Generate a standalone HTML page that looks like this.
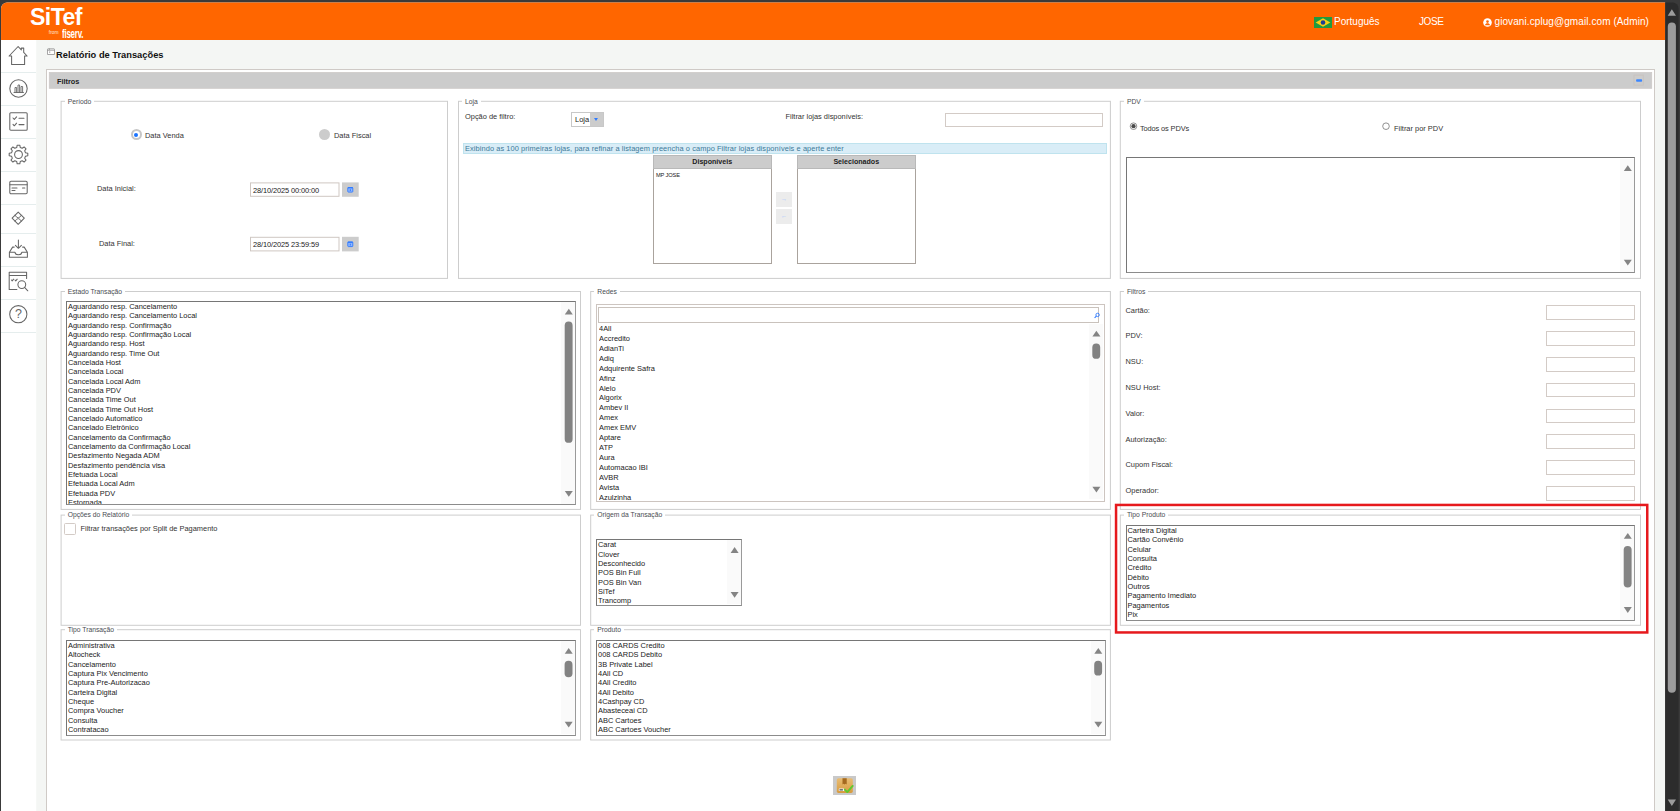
<!DOCTYPE html>
<html lang="pt-BR">
<head>
<meta charset="utf-8">
<title>Relatório de Transações</title>
<style>
*{box-sizing:border-box;margin:0;padding:0}
html,body{width:1680px;height:811px;overflow:hidden}
body{background:#3a3a3a;font-family:"Liberation Sans",Arial,sans-serif;color:#222;position:relative;font-size:7.33px}
body>*{position:absolute}
.sep{left:1px;width:35px;height:1px;background:#e5eded}
.ico{left:1px;width:35px}
.ico svg{display:block;margin:0 auto;overflow:visible}
.hw{color:#fff;font-size:10px;line-height:12px;white-space:nowrap}
#title{left:56px;top:48.6px;font-size:9.3px;font-weight:bold;color:#111;line-height:12px;white-space:nowrap}
#panel{left:46px;top:69px;width:1609px;height:760px;background:#fff;border:1px solid #cfcac6}
#pbar{left:49px;top:72px;width:1602px;height:16px;background:#cccccc}
.fs{border:1px solid #d6d6d6;background:#fff}
.lg{background:#fff;padding:0 3px 0 3px;font-size:6.75px;line-height:8px;color:#4a4d52;white-space:nowrap}
.t{white-space:nowrap;font-size:7.43px;line-height:9px;color:#333}
.inp{background:#fff;border:1px solid #d3cbc6}
.lb{background:#fff;border:1px solid #767676;border-right-color:#9a9a9a;border-bottom-color:#8c8c8c;overflow:hidden;font-size:7.44px;line-height:9.33px;color:#222;white-space:nowrap;padding:0 0 0 1px}
.lb div{height:9.33px}
.up,.dn{width:0;height:0;border-left:4.5px solid transparent;border-right:4.5px solid transparent}
.up{border-bottom:6px solid #6e6e6e}
.dn{border-top:6px solid #6e6e6e}
.th{background:#828282;border-radius:4px}
.trk{background:#fafafa}
</style>
</head>
<body>
<svg style="left:0;top:0" width="1680" height="811" viewBox="0 0 1680 811"><path d="M1.04 811 V8.44 a6 6 0 0 1 6 -6 H1665.2 V811 Z" fill="#f4f6f4"/><path d="M1.04 40 V8.44 a6 6 0 0 1 6 -6 H1665.2 V40 Z" fill="#ff6600"/><rect x="1.04" y="40" width="35.2" height="771" fill="#fff"/><path d="M1665.2 811 V2.44 H1672.6 a6 6 0 0 1 6 6 V811 Z" fill="#2c2c2c"/><rect x="1667.8" y="22.6" width="8.1" height="670.2" rx="4" fill="#9c9c9c"/><path d="M1671.85 9.2 L1676 15.7 H1667.7 Z M1671.85 806.1 L1676 799.6 H1667.7 Z" fill="#9c9c9c"/></svg>
<div style="left:30px;top:4px;color:#fff;font-size:23px;font-weight:bold;line-height:26px;letter-spacing:-0.55px;white-space:nowrap;">SiTef</div>
<div style="left:48.8px;top:29.8px;color:#ffe6d5;font-size:4.8px;line-height:5px;white-space:nowrap;">from</div>
<div style="left:61.5px;top:26.4px;color:#fff;font-size:13.6px;font-weight:bold;line-height:15px;letter-spacing:-0.4px;white-space:nowrap;transform:scaleX(0.585);transform-origin:0 0;">fiserv.</div>
<svg style="left:1314px;top:17px" width="18" height="11" viewBox="0 0 18 11"><rect width="18" height="11" fill="#1f9a3f"/><polygon points="9,1.2 16.3,5.5 9,9.8 1.7,5.5" fill="#f7d117"/><circle cx="9" cy="5.5" r="2.3" fill="#1b3f94"/></svg>
<div class="hw" style="left:1334px;top:15.5px;">Português</div>
<div class="hw" style="left:1419px;top:15.5px;letter-spacing:-0.4px;">JOSE</div>
<svg style="left:1483px;top:18px" width="9" height="9" viewBox="0 0 9 9"><circle cx="4.5" cy="4.5" r="4.3" fill="#fff"/><circle cx="4.5" cy="3.6" r="1.3" fill="#ff6600"/><path d="M2 7.2c.3-1.5 1.3-2 2.5-2s2.2.5 2.5 2z" fill="#ff6600"/></svg>
<div class="hw" style="left:1494.5px;top:15.5px;letter-spacing:0.085px;">giovani.cplug@gmail.com (Admin)</div>
<div class="sep" style="left:1px;top:72px;"></div>
<div class="sep" style="left:1px;top:105px;"></div>
<div class="sep" style="left:1px;top:138px;"></div>
<div class="sep" style="left:1px;top:171px;"></div>
<div class="sep" style="left:1px;top:204px;"></div>
<div class="sep" style="left:1px;top:233px;"></div>
<div class="sep" style="left:1px;top:266px;"></div>
<div class="sep" style="left:1px;top:298.5px;"></div>
<div class="sep" style="left:1px;top:332px;"></div>
<svg style="left:8px;top:45px" width="21" height="21" viewBox="8 45 21 21" fill="none" stroke="#666" stroke-width="1.05" stroke-linejoin="round" stroke-linecap="round"><g transform="translate(8.10 45.50)"><path d="M1 10.5 L10 1 L13.2 4.4 V2.6 H15.6 V6.9 L19 10.5 H16.5 V19 H3.5 V10.5 Z"/></g></svg>
<svg style="left:9px;top:79px" width="19" height="19" viewBox="9 79 19 19" fill="none" stroke="#666" stroke-width="1.05" stroke-linejoin="round" stroke-linecap="round"><g transform="translate(9.00 79.00)"><circle cx="9.5" cy="9.5" r="8.7"/><path d="M5 13.5 H14.5 M6 13.5 V8.5 H7.6 V13.5 M9 13.5 V6 H10.6 V13.5 M12 13.5 V7.5 H13.6 V13.5" stroke-width="0.9"/></g></svg>
<svg style="left:9px;top:112px" width="19" height="19" viewBox="9 112 19 19" fill="none" stroke="#666" stroke-width="1.05" stroke-linejoin="round" stroke-linecap="round"><g transform="translate(9.00 112.00)"><rect x="0.8" y="0.8" width="17.4" height="17.4" rx="1"/><path d="M4 6 L5.3 7.4 L7.6 4.8 M10 6.2 H15 M4 12.4 L5.3 13.8 L7.6 11.2 M10 12.6 H15"/></g></svg>
<svg style="left:8px;top:144px" width="21" height="21" viewBox="8 144 21 21" fill="none" stroke="#666" stroke-width="1.05" stroke-linejoin="round" stroke-linecap="round"><g transform="translate(8.50 144.50)"><path d="M19.31 8.68 L19.31 11.32 L16.97 11.79 L16.20 13.67 L17.52 15.64 L15.64 17.52 L13.67 16.20 L11.79 16.97 L11.32 19.31 L8.68 19.31 L8.21 16.97 L6.33 16.20 L4.36 17.52 L2.48 15.64 L3.80 13.67 L3.03 11.79 L0.69 11.32 L0.69 8.68 L3.03 8.21 L3.80 6.33 L2.48 4.36 L4.36 2.48 L6.33 3.80 L8.21 3.03 L8.68 0.69 L11.32 0.69 L11.79 3.03 L13.67 3.80 L15.64 2.48 L17.52 4.36 L16.20 6.33 L16.97 8.21 Z"/><circle cx="10" cy="10" r="3.9"/></g></svg>
<svg style="left:9px;top:180px" width="19" height="15" viewBox="9 180 19 15" fill="none" stroke="#666" stroke-width="1.05" stroke-linejoin="round" stroke-linecap="round"><g transform="translate(9.00 180.50)"><rect x="0.8" y="0.8" width="17.4" height="12.4" rx="1.2"/><path d="M0.8 4.2 H18.2 M3 7.5 H8 M13.5 7.5 H15.8 M3 10 H6"/></g></svg>
<svg style="left:11px;top:211px" width="15" height="15" viewBox="11 211 15 15" fill="none" stroke="#666" stroke-width="1.05" stroke-linejoin="round" stroke-linecap="round"><g transform="translate(11.20 211.20)"><path d="M7 0.9 L13.1 7 L7 13.1 L0.9 7 Z"/><path d="M3.8 4 Q7 9.6 10.2 4 M3.8 10 Q7 4.4 10.2 10" stroke-width="0.9"/></g></svg>
<svg style="left:8px;top:239px" width="21" height="20" viewBox="8 239 21 20" fill="none" stroke="#666" stroke-width="1.05" stroke-linejoin="round" stroke-linecap="round"><g transform="translate(8.40 239.10)"><path d="M10 0.8 V9 M7 6.2 L10 9.2 L13 6.2"/><path d="M5.8 8 H4.2 L1 13.2 V18.2 H19 V13.2 L15.8 8 H14.2 M1 13.2 H6.6 Q7 15.6 10 15.6 Q13 15.6 13.4 13.2 H19"/></g></svg>
<svg style="left:8px;top:271px" width="21" height="21" viewBox="8 271 21 21" fill="none" stroke="#666" stroke-width="1.05" stroke-linejoin="round" stroke-linecap="round"><g transform="translate(8.40 271.40)"><path d="M18.2 7 V0.8 H0.8 V18.2 H8.5 M0.8 4.2 H18.2 M3 8.6 L3.8 9.5 L5.2 7.8 M6.6 8.6 L7.4 9.5 L8.8 7.8"/><circle cx="13.4" cy="13.2" r="3.9"/><path d="M16.2 16 L19.4 19.4"/></g></svg>
<svg style="left:8px;top:304px" width="20" height="20" viewBox="8 304 20 20" fill="none" stroke="#666" stroke-width="1.05" stroke-linejoin="round" stroke-linecap="round"><g transform="translate(8.80 304.70)"><circle cx="9.5" cy="9.5" r="8.6"/></g></svg>
<div style="left:1px;top:307.2px;width:35px;text-align:center;font-size:12.5px;line-height:14px;color:#666;">?</div>
<svg style="left:47px;top:48px" width="8" height="7" viewBox="0 0 8 7"><rect x="0.4" y="0.9" width="7.2" height="5.7" rx="0.6" fill="#fff" stroke="#858585" stroke-width="0.8"/><path d="M0.5 2.4H7.5M2.4 0.5V2.2" stroke="#858585" stroke-width="0.6" fill="none"/><rect x="2" y="3.3" width="1.3" height="1.8" fill="#bbb"/></svg>
<div id="title">Relatório de Transações</div>
<div id="panel"></div>
<svg style="left:47px;top:70px" width="1607" height="21" viewBox="47 70 1607 21" ><rect x="49.2" y="72.3" width="1602.60" height="16.10" fill="#cccccc" stroke="#cbc6c3" stroke-width="0.6"/></svg>
<div style="left:57px;top:76.5px;font-size:7.3px;font-weight:bold;line-height:9px;color:#222;white-space:nowrap;">Filtros</div>
<svg style="left:1632px;top:73px" width="14" height="15" viewBox="1632 73 14 15" ><rect x="1634" y="75.1" width="9.30" height="10.00" fill="none" stroke="#c8c2be" stroke-width="0.9"/></svg>
<svg style="left:1635px;top:78px" width="9" height="5" viewBox="1635 78 9 5"><rect x="1636.1" y="79.3" width="6" height="2.4" rx="0.8" fill="#3b86ff"/></svg>
<svg style="left:59px;top:99px" width="391" height="182" viewBox="59 99 391 182" ><rect x="61.1" y="101.3" width="386.40" height="177.10" fill="#fff" stroke="#cdcdcd" stroke-width="1"/></svg>
<div class="lg" style="left:64.7px;top:97.7px;">Período</div>
<div style="left:130.7px;top:129px;width:11px;height:11px;border-radius:50%;background:#fff;border:2.6px solid #c6c6c6;"></div>
<div style="left:134.2px;top:132.5px;width:4px;height:4px;border-radius:50%;background:#1a73ff;"></div>
<div class="t" style="left:145px;top:130.5px;">Data Venda</div>
<div style="left:319.2px;top:129px;width:11.3px;height:11.3px;border-radius:50%;background:#ccc;"></div>
<div class="t" style="left:334px;top:130.5px;">Data Fiscal</div>
<div class="t" style="left:97px;top:184px;">Data Inicial:</div>
<svg style="left:248px;top:180px" width="93" height="19" viewBox="248 180 93 19" ><rect x="250.5" y="182.9" width="88.50" height="13.40" fill="#fff" stroke="#cfc7c2" stroke-width="1"/></svg>
<div class="t" style="left:253px;top:185.5px;color:#222;letter-spacing:-0.11px;">28/10/2025 00:00:00</div>
<svg style="left:340px;top:180px" width="21" height="19" viewBox="340 180 21 19" ><rect x="342" y="182.4" width="16.70" height="14.40" fill="#cccccc" stroke="none" stroke-width="0"/></svg>
<svg style="left:347px;top:186px" width="7" height="7" viewBox="347 186 7 7" ><g transform="translate(347.30 186.60)"><rect x="0.5" y="0.9" width="5" height="4.6" rx="0.6" fill="#8fb6ff" stroke="#2f7bff" stroke-width="0.9"/><rect x="0.5" y="0.5" width="5" height="1.3" fill="#2f7bff"/><rect x="2.5" y="2.6" width="1" height="1.8" fill="#2f7bff"/></g></svg>
<div class="t" style="left:99px;top:238.5px;">Data Final:</div>
<svg style="left:248px;top:235px" width="93" height="18" viewBox="248 235 93 18" ><rect x="250.5" y="237.3" width="88.50" height="13.60" fill="#fff" stroke="#cfc7c2" stroke-width="1"/></svg>
<div class="t" style="left:253px;top:240px;color:#222;letter-spacing:-0.11px;">28/10/2025 23:59:59</div>
<svg style="left:340px;top:234px" width="21" height="20" viewBox="340 234 21 20" ><rect x="342" y="236.8" width="16.70" height="14.60" fill="#cccccc" stroke="none" stroke-width="0"/></svg>
<svg style="left:347px;top:241px" width="7" height="7" viewBox="347 241 7 7" ><g transform="translate(347.30 241.10)"><rect x="0.5" y="0.9" width="5" height="4.6" rx="0.6" fill="#8fb6ff" stroke="#2f7bff" stroke-width="0.9"/><rect x="0.5" y="0.5" width="5" height="1.3" fill="#2f7bff"/><rect x="2.5" y="2.6" width="1" height="1.8" fill="#2f7bff"/></g></svg>
<svg style="left:456px;top:99px" width="657" height="182" viewBox="456 99 657 182" ><rect x="458.5" y="101.3" width="651.90" height="177.10" fill="#fff" stroke="#cdcdcd" stroke-width="1"/></svg>
<div class="lg" style="left:462.1px;top:97.7px;">Loja</div>
<div class="t" style="left:465px;top:112px;">Opção de filtro:</div>
<div class="inp" style="left:571px;top:112px;width:33px;height:15px;border-color:#c8c8c8;"></div>
<div class="t" style="left:575px;top:115.3px;font-size:7.5px;color:#222;">Loja</div>
<div style="left:590.3px;top:113px;width:12.7px;height:13px;background:#cccccc;"></div>
<div style="left:594.2px;top:118px;width:0;height:0;border-left:2.5px solid transparent;border-right:2.5px solid transparent;border-top:3px solid #2f7bff;"></div>
<div class="t" style="left:785.5px;top:112px;">Filtrar lojas disponíveis:</div>
<div class="inp" style="left:945px;top:112.5px;width:158px;height:14.5px;"></div>
<div style="left:463px;top:143px;width:644.0px;height:10.5px;background:#d9edf7;border:1px solid #bfe3ee;"></div>
<div class="t" style="left:465px;top:144px;color:#3d7a99;letter-spacing:0.077px;">Exibindo as 100 primeiras lojas, para refinar a listagem preencha o campo Filtrar lojas disponíveis e aperte enter</div>
<div style="left:652.5px;top:154.5px;width:119.5px;height:109px;background:#fff;border:1px solid #aaa39d;"></div>
<div style="left:652.5px;top:154.5px;width:119.5px;height:14px;background:#cccccc;border:1px solid #b9b9b9;text-align:center;font-weight:bold;font-size:7.1px;line-height:12px;color:#222;">Disponíveis</div>
<div style="left:796.5px;top:154.5px;width:119.5px;height:109px;background:#fff;border:1px solid #aaa39d;"></div>
<div style="left:796.5px;top:154.5px;width:119.5px;height:14px;background:#cccccc;border:1px solid #b9b9b9;text-align:center;font-weight:bold;font-size:7.1px;line-height:12px;color:#222;">Selecionados</div>
<div class="t" style="left:656px;top:172px;font-size:5.7px;line-height:7px;color:#222;letter-spacing:-0.15px;">MP JOSE</div>
<div style="left:775.5px;top:192px;width:16.5px;height:14.8px;background:#ececec;text-align:center;font-size:6.2px;line-height:13.5px;color:#9cc0ff;">→</div>
<div style="left:775.5px;top:209px;width:16.5px;height:14.5px;background:#ececec;text-align:center;font-size:6.2px;line-height:13.5px;color:#9cc0ff;">←</div>
<svg style="left:1118px;top:99px" width="525" height="182" viewBox="1118 99 525 182" ><rect x="1120.3" y="101.3" width="520.20" height="177.10" fill="#fff" stroke="#cdcdcd" stroke-width="1"/></svg>
<div class="lg" style="left:1123.8999999999999px;top:97.7px;">PDV</div>
<svg style="left:1129px;top:122px" width="9" height="9" viewBox="1129 122 9 9" ><g transform="translate(1129.50 122.20)"><circle cx="4" cy="4" r="3.3" fill="#fff" stroke="#767676" stroke-width="0.8"/><circle cx="4" cy="4" r="2.1" fill="#4a4a4a"/></g></svg>
<div class="t" style="left:1140px;top:124px;letter-spacing:-0.13px;">Todos os PDVs</div>
<svg style="left:1382px;top:122px" width="8" height="9" viewBox="1382 122 8 9" ><g transform="translate(1382.00 122.20)"><circle cx="4" cy="4" r="3.3" fill="#fff" stroke="#767676" stroke-width="0.8"/></g></svg>
<div class="t" style="left:1394px;top:124px;">Filtrar por PDV</div>
<div class="lb" style="left:1125.5px;top:157px;width:509.5px;height:116px;"></div>
<div class="trk" style="left:1620px;top:158.5px;width:14px;height:113.69999999999999px;"></div>
<svg style="left:1622px;top:164px" width="11" height="9" viewBox="1622 164 11 9" ><path d="M1627.80 165.20 L1631.80 171.00 H1623.80 Z" fill="#848484"/></svg>
<svg style="left:1622px;top:258px" width="11" height="9" viewBox="1622 258 11 9" ><path d="M1627.80 265.50 L1631.80 259.70 H1623.80 Z" fill="#848484"/></svg>
<svg style="left:59px;top:289px" width="524" height="223" viewBox="59 289 524 223" ><rect x="61.1" y="291.5" width="519.40" height="217.90" fill="#fff" stroke="#cdcdcd" stroke-width="1"/></svg>
<div class="lg" style="left:64.7px;top:287.9px;">Estado Transação</div>
<div class="lb" style="left:66px;top:301px;width:510px;height:203.5px;padding-top:0px;"><div>Aguardando resp. Cancelamento</div><div>Aguardando resp. Cancelamento Local</div><div>Aguardando resp. Confirmação</div><div>Aguardando resp. Confirmação Local</div><div>Aguardando resp. Host</div><div>Aguardando resp. Time Out</div><div>Cancelada Host</div><div>Cancelada Local</div><div>Cancelada Local Adm</div><div>Cancelada PDV</div><div>Cancelada Time Out</div><div>Cancelada Time Out Host</div><div>Cancelado Automatico</div><div>Cancelado Eletrônico</div><div>Cancelamento da Confirmação</div><div>Cancelamento da Confirmação Local</div><div>Desfazimento Negada ADM</div><div>Desfazimento pendência visa</div><div>Efetuada Local</div><div>Efetuada Local Adm</div><div>Efetuada PDV</div><div>Estornada</div></div>
<div class="trk" style="left:561px;top:302px;width:14px;height:201.5px;"></div>
<svg style="left:563px;top:307px" width="11" height="9" viewBox="563 307 11 9" ><path d="M568.80 308.70 L572.80 314.50 H564.80 Z" fill="#848484"/></svg>
<svg style="left:563px;top:490px" width="11" height="8" viewBox="563 490 11 8" ><path d="M568.80 496.80 L572.80 491.00 H564.80 Z" fill="#848484"/></svg>
<svg style="left:563px;top:320px" width="11" height="124" viewBox="563 320 11 124" ><rect x="564.70" y="321.60" width="7.9" height="121.2" rx="3.9" fill="#828282"/></svg>
<svg style="left:588px;top:289px" width="525" height="223" viewBox="588 289 525 223" ><rect x="590.7" y="291.5" width="519.70" height="217.90" fill="#fff" stroke="#cdcdcd" stroke-width="1"/></svg>
<div class="lg" style="left:594.3000000000001px;top:287.9px;">Redes</div>
<div style="left:596px;top:304px;width:509px;height:197.5px;background:#fff;border:1px solid #cdc5c0;"></div>
<div style="left:597.5px;top:307px;width:501px;height:15.5px;background:#fff;border:1px solid #c9c2bc;"></div>
<svg style="left:1094px;top:312px" width="6" height="7" viewBox="1094 312 6 7" ><g transform="translate(1094.00 312.50)"><circle cx="3.6" cy="2.4" r="1.7" fill="none" stroke="#2f7bff" stroke-width="0.9"/><path d="M2.4 3.6L0.6 5.4" stroke="#2f7bff" stroke-width="1.1"/></g></svg>
<div style="left:599px;top:324px;width:400px;height:177px;overflow:hidden;white-space:nowrap;font-size:7.44px;line-height:9.92px;color:#222;"><div>4All</div><div>Accredito</div><div>AdianTi</div><div>Adiq</div><div>Adquirente Safra</div><div>Afinz</div><div>Alelo</div><div>Algorix</div><div>Ambev II</div><div>Amex</div><div>Amex EMV</div><div>Aptare</div><div>ATP</div><div>Aura</div><div>Automacao IBI</div><div>AVBR</div><div>Avista</div><div>Azulzinha</div></div>
<div class="trk" style="left:1088.6px;top:324px;width:14px;height:175.2px;"></div>
<svg style="left:1091px;top:329px" width="11" height="9" viewBox="1091 329 11 9" ><path d="M1096.40 330.70 L1100.40 336.50 H1092.40 Z" fill="#848484"/></svg>
<svg style="left:1091px;top:485px" width="11" height="9" viewBox="1091 485 11 9" ><path d="M1096.40 492.50 L1100.40 486.70 H1092.40 Z" fill="#848484"/></svg>
<svg style="left:1091px;top:342px" width="11" height="18" viewBox="1091 342 11 18" ><rect x="1092.30" y="343.60" width="7.9" height="15.2" rx="3.9" fill="#828282"/></svg>
<svg style="left:1118px;top:289px" width="525" height="223" viewBox="1118 289 525 223" ><rect x="1120.3" y="291.5" width="520.20" height="217.90" fill="#fff" stroke="#cdcdcd" stroke-width="1"/></svg>
<div class="lg" style="left:1123.8999999999999px;top:287.9px;">Filtros</div>
<div class="t" style="left:1125.5px;top:305.59999999999997px;">Cartão:</div>
<div class="inp" style="left:1545.5px;top:305.0px;width:89.5px;height:14.5px;"></div>
<div class="t" style="left:1125.5px;top:331.4px;">PDV:</div>
<div class="inp" style="left:1545.5px;top:331.0px;width:89.5px;height:14.5px;"></div>
<div class="t" style="left:1125.5px;top:357.2px;">NSU:</div>
<div class="inp" style="left:1545.5px;top:357.0px;width:89.5px;height:14.5px;"></div>
<div class="t" style="left:1125.5px;top:383.0px;">NSU Host:</div>
<div class="inp" style="left:1545.5px;top:382.5px;width:89.5px;height:14.5px;"></div>
<div class="t" style="left:1125.5px;top:408.79999999999995px;">Valor:</div>
<div class="inp" style="left:1545.5px;top:408.5px;width:89.5px;height:14.5px;"></div>
<div class="t" style="left:1125.5px;top:434.59999999999997px;">Autorização:</div>
<div class="inp" style="left:1545.5px;top:434.0px;width:89.5px;height:14.5px;"></div>
<div class="t" style="left:1125.5px;top:460.4px;">Cupom Fiscal:</div>
<div class="inp" style="left:1545.5px;top:460.0px;width:89.5px;height:14.5px;"></div>
<div class="t" style="left:1125.5px;top:486.19999999999993px;">Operador:</div>
<div class="inp" style="left:1545.5px;top:486.0px;width:89.5px;height:14.5px;"></div>
<svg style="left:59px;top:513px" width="524" height="115" viewBox="59 513 524 115" ><rect x="61.1" y="515.1" width="519.40" height="110.20" fill="#fff" stroke="#cdcdcd" stroke-width="1"/></svg>
<div class="lg" style="left:64.7px;top:511.0px;">Opções do Relatório</div>
<div style="left:64px;top:523px;width:11.5px;height:11.5px;background:#fff;border:1px solid #d3cbc6;border-radius:1.5px;"></div>
<div class="t" style="left:80.5px;top:523.7px;">Filtrar transações por Split de Pagamento</div>
<svg style="left:588px;top:513px" width="525" height="115" viewBox="588 513 525 115" ><rect x="590.7" y="515.1" width="519.70" height="110.20" fill="#fff" stroke="#cdcdcd" stroke-width="1"/></svg>
<div class="lg" style="left:594.3000000000001px;top:511.0px;">Origem da Transação</div>
<div class="lb" style="left:596px;top:539px;width:146px;height:66.5px;padding-top:0.3px;"><div>Carat</div><div>Clover</div><div>Desconhecido</div><div>POS Bin Full</div><div>POS Bin Van</div><div>SiTef</div><div>Trancomp</div></div>
<div class="trk" style="left:726.8px;top:540.4px;width:14px;height:64.10000000000002px;"></div>
<svg style="left:729px;top:546px" width="11" height="9" viewBox="729 546 11 9" ><path d="M734.60 547.10 L738.60 552.90 H730.60 Z" fill="#848484"/></svg>
<svg style="left:729px;top:591px" width="11" height="8" viewBox="729 591 11 8" ><path d="M734.60 597.80 L738.60 592.00 H730.60 Z" fill="#848484"/></svg>
<svg style="left:1113px;top:502px" width="538" height="134" viewBox="1113 502 538 134"><rect x="1116.05" y="504.95" width="531.2" height="127.5" fill="none" stroke="#e6191d" stroke-width="2.5"/></svg>
<svg style="left:1118px;top:513px" width="525" height="115" viewBox="1118 513 525 115" ><rect x="1120.3" y="515.1" width="520.20" height="110.20" fill="#fff" stroke="#cdcdcd" stroke-width="1"/></svg>
<div class="lg" style="left:1123.8999999999999px;top:511.0px;">Tipo Produto</div>
<div class="lb" style="left:1125.5px;top:525px;width:509.5px;height:95.5px;padding-top:0px;"><div>Carteira Digital</div><div>Cartão Convênio</div><div>Celular</div><div>Consulta</div><div>Crédito</div><div>Débito</div><div>Outros</div><div>Pagamento Imediato</div><div>Pagamentos</div><div>Pix</div></div>
<div class="trk" style="left:1620px;top:526.3px;width:14px;height:93.30000000000007px;"></div>
<svg style="left:1622px;top:532px" width="11" height="8" viewBox="1622 532 11 8" ><path d="M1627.80 533.00 L1631.80 538.80 H1623.80 Z" fill="#848484"/></svg>
<svg style="left:1622px;top:606px" width="11" height="9" viewBox="1622 606 11 9" ><path d="M1627.80 612.90 L1631.80 607.10 H1623.80 Z" fill="#848484"/></svg>
<svg style="left:1622px;top:544px" width="11" height="45" viewBox="1622 544 11 45" ><rect x="1623.70" y="545.90" width="7.9" height="41.5" rx="3.9" fill="#828282"/></svg>
<svg style="left:59px;top:627px" width="524" height="115" viewBox="59 627 524 115" ><rect x="61.1" y="629.7" width="519.40" height="110.30" fill="#fff" stroke="#cdcdcd" stroke-width="1"/></svg>
<div class="lg" style="left:64.7px;top:626.1px;">Tipo Transação</div>
<div class="lb" style="left:66px;top:640px;width:510px;height:95.5px;padding-top:0px;"><div>Administrativa</div><div>Altocheck</div><div>Cancelamento</div><div>Captura Pix Vencimento</div><div>Captura Pre-Autorizacao</div><div>Carteira Digital</div><div>Cheque</div><div>Compra Voucher</div><div>Consulta</div><div>Contratacao</div></div>
<div class="trk" style="left:560.9px;top:641.2px;width:14px;height:93.0px;"></div>
<svg style="left:563px;top:646px" width="11" height="9" viewBox="563 646 11 9" ><path d="M568.70 647.90 L572.70 653.70 H564.70 Z" fill="#848484"/></svg>
<svg style="left:563px;top:720px" width="11" height="9" viewBox="563 720 11 9" ><path d="M568.70 727.50 L572.70 721.70 H564.70 Z" fill="#848484"/></svg>
<svg style="left:563px;top:659px" width="11" height="20" viewBox="563 659 11 20" ><rect x="564.60" y="660.80" width="7.9" height="16.4" rx="3.9" fill="#828282"/></svg>
<svg style="left:588px;top:627px" width="525" height="115" viewBox="588 627 525 115" ><rect x="590.7" y="629.7" width="519.70" height="110.30" fill="#fff" stroke="#cdcdcd" stroke-width="1"/></svg>
<div class="lg" style="left:594.3000000000001px;top:626.1px;">Produto</div>
<div class="lb" style="left:596px;top:640px;width:509.5px;height:95.5px;padding-top:0px;"><div>008 CARDS Credito</div><div>008 CARDS Debito</div><div>3B Private Label</div><div>4All CD</div><div>4All Credito</div><div>4All Debito</div><div>4Cashpay CD</div><div>Abasteceai CD</div><div>ABC Cartoes</div><div>ABC Cartoes Voucher</div></div>
<div class="trk" style="left:1090.5px;top:641.2px;width:14px;height:93.0px;"></div>
<svg style="left:1093px;top:646px" width="11" height="9" viewBox="1093 646 11 9" ><path d="M1098.30 647.90 L1102.30 653.70 H1094.30 Z" fill="#848484"/></svg>
<svg style="left:1093px;top:720px" width="11" height="9" viewBox="1093 720 11 9" ><path d="M1098.30 727.50 L1102.30 721.70 H1094.30 Z" fill="#848484"/></svg>
<svg style="left:1093px;top:659px" width="11" height="18" viewBox="1093 659 11 18" ><rect x="1094.20" y="660.80" width="7.9" height="14.8" rx="3.9" fill="#828282"/></svg>
<div style="left:833px;top:776px;width:23px;height:19px;background:#c9c9c9;"></div>
<svg style="left:836px;top:778px" width="18" height="16" viewBox="836 778 18 16" ><g transform="translate(836.50 778.00)"><defs><linearGradient id="g1" x1="0" y1="0" x2="0" y2="1"><stop offset="0" stop-color="#e9bd74"/><stop offset="1" stop-color="#d79b3f"/></linearGradient></defs><rect x="0.3" y="0.3" width="16" height="14.6" rx="1.6" fill="url(#g1)"/><path d="M6 0.3h4.2v6.2l-1-0.8-1.1 0.9-1.1-0.9-1 0.8z" fill="#a4691f"/><rect x="2.3" y="10.6" width="5.6" height="2.5" rx="0.4" fill="#f4f4f4"/><rect x="3" y="11.2" width="3.4" height="1.3" fill="#555"/><path d="M8.3 11.6l2.5 2.5 5.4-6.2" fill="none" stroke="#5fc92e" stroke-width="1.9" stroke-linecap="round" stroke-linejoin="round"/></g></svg>
</body>
</html>
